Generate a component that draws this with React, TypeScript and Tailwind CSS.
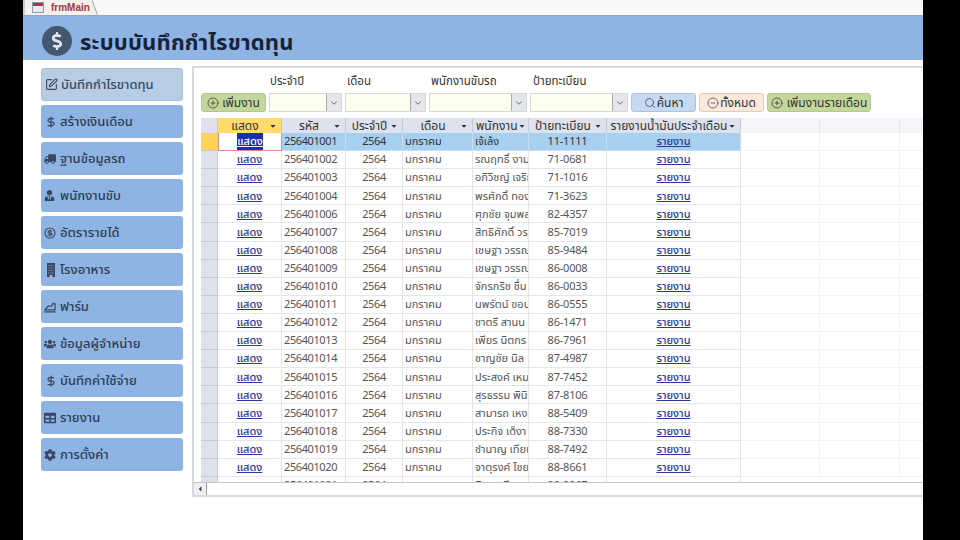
import React from 'react';
import { CirclePlus, CircleMinus, Search, ChevronDown, CircleDollarSign, SquarePen, DollarSign } from 'lucide-react';
import { FaDollarSign, FaTruck, FaUserTie, FaUsers, FaTable, FaCog, FaCaretDown, FaCaretLeft } from 'react-icons/fa';

const BuildingIcon = () => (
  <svg width="10" height="14" viewBox="0 0 10 14" fill="#3a4660" className="ml-[2px]">
    <path d="M1 0h8v14H6.5v-2h-3v2H1z" />
    <path d="M2.5 2h1v1h-1zM4.5 2h1v1h-1zM6.5 2h1v1h-1zM2.5 4.5h1v1h-1zM4.5 4.5h1v1h-1zM6.5 4.5h1v1h-1zM2.5 7h1v1h-1zM4.5 7h1v1h-1zM6.5 7h1v1h-1zM2.5 9.5h1v1h-1zM4.5 9.5h1v1h-1zM6.5 9.5h1v1h-1z" fill="#8db4e2" />
  </svg>
);

const FarmIcon = () => (
  <svg width="12" height="12" viewBox="0 0 13 12" fill="none" stroke="#3a4660" strokeWidth="1.3">
    <path d="M0.5 11.3h12" strokeWidth="1.4" />
    <path d="M1 9.2h11V2.5H9.5L8 5H4.5L1 9.2z" />
    <path d="M10 1v2" />
  </svg>
);

const menu = [
  { label: 'บันทึกกำไรขาดทุน', icon: <SquarePen className="w-[13px] h-[13px]" />, active: true },
  { label: 'สร้างเงินเดือน', icon: <DollarSign className="w-[12px] h-[12px] ml-[1px]" strokeWidth={2.5} /> },
  { label: 'ฐานข้อมูลรถ', icon: <FaTruck className="w-[12px] h-[12px] -scale-x-100" /> },
  { label: 'พนักงานขับ', icon: <FaUserTie className="w-[11px] h-[11px]" /> },
  { label: 'อัตรารายได้', icon: <CircleDollarSign className="w-[12px] h-[12px]" strokeWidth={2.25} /> },
  { label: 'โรงอาหาร', icon: <BuildingIcon /> },
  { label: 'ฟาร์ม', icon: <FarmIcon /> },
  { label: 'ข้อมูลผู้จำหน่าย', icon: <FaUsers className="w-[12px] h-[12px]" /> },
  { label: 'บันทึกค่าใช้จ่าย', icon: <DollarSign className="w-[12px] h-[12px] ml-[1px]" strokeWidth={2.5} /> },
  { label: 'รายงาน', icon: <FaTable className="w-[12px] h-[12px]" /> },
  { label: 'การตั้งค่า', icon: <FaCog className="w-[12px] h-[12px]" /> },
];

const rows = [
  ['256401001', 'เจ้เล้ง', '11-1111'],
  ['256401002', 'รณฤทธิ์ งาม', '71-0681'],
  ['256401003', 'อภิวิชญ์ เจริญ', '71-1016'],
  ['256401004', 'พรศักดิ์ ทอง', '71-3623'],
  ['256401006', 'ศุภชัย จุมพล', '82-4357'],
  ['256401007', 'สิทธิศักดิ์ วร', '85-7019'],
  ['256401008', 'เชษฐา วรรณ', '85-9484'],
  ['256401009', 'เชษฐา วรรณ', '86-0008'],
  ['256401010', 'จักรกริช ชื่น', '86-0033'],
  ['256401011', 'นพรัตน์ ขอบ', '86-0555'],
  ['256401012', 'ชาตรี สานน', '86-1471'],
  ['256401013', 'เพียร นิตกร', '86-7961'],
  ['256401014', 'ชาญชัย นิล', '87-4987'],
  ['256401015', 'ประสงค์ เหม', '87-7452'],
  ['256401016', 'สุรธรรม พินิจ', '87-8106'],
  ['256401017', 'สามารถ เหง', '88-5409'],
  ['256401018', 'ประกิจ เด็งา', '88-7330'],
  ['256401019', 'ชำนาญ เทียน', '88-7492'],
  ['256401020', 'จาตุรงค์ ไชย', '88-8661'],
  ['256401021', 'นิกร ศรี', '88-9967'],
];

const gridCols = 'grid grid-cols-[17px_64px_64px_57px_70px_56px_78px_134px_79px_80px_1fr]';

const Combo = ({ width }: { width: string }) => (
  <div className={`${width} h-[19px] flex bg-[#fffff0] border border-[#d4d8de]`}>
    <div className="flex-1" />
    <div className="w-[15px] bg-[#e4e6ea] border-l border-[#a8acb2] flex items-center justify-center">
      <ChevronDown className="w-[10px] h-[10px] text-[#555]" />
    </div>
  </div>
);

const HeadCell = ({ label, active }: { label: string; active?: boolean }) => (
  <div className={`flex items-center h-[15px] pl-[3px] pr-[4px] text-[12px] border-r border-[#c5cbd6] ${active ? 'bg-[#fedb6a]' : 'bg-[#dde2ec]'}`}>
    <span className="flex-1 whitespace-nowrap text-center">{label}</span>
    <FaCaretDown className="w-[8px] h-[8px] text-[#333] shrink-0" />
  </div>
);

export default function App() {
  return (
    <div className="w-[960px] h-[540px] flex bg-black overflow-hidden text-[11px] text-[#555] font-['Noto_Sans','Noto_Sans_Thai','Liberation_Sans',sans-serif]">
      <div className="w-[23px] shrink-0" />
      <div className="w-[900px] shrink-0 flex flex-col bg-white">
        {/* tab strip */}
        <div className="h-[16px] bg-[#f8f8f8] flex border-b border-[#9aa5b4]">
          <div className="w-[69px] h-[15px] bg-[#f3f0ee] flex items-center pl-[7px] gap-[7px] border-l-2 border-[#c8ccd2]">
            <div className="w-[12px] h-[11px] border border-[#8a98b0] bg-[#e8eaf2]">
              <div className="h-[3px] bg-[#a8324a]" />
            </div>
            <span className="text-[10px] font-bold text-[#a4373a] font-['Liberation_Sans']">frmMain</span>
          </div>
          <svg width="6" height="15" viewBox="0 0 6 15" className="bg-[#f8f8f8]">
            <path d="M0 0L0 15L6 15z" fill="#f3f0ee" />
            <path d="M0 0L5.5 15" stroke="#a8a4a0" fill="none" />
          </svg>
        </div>
        {/* header */}
        <div className="h-[44px] bg-[#8db4e2] flex items-center pl-[19px] gap-[8px] pt-[5px]">
          <div className="w-[30px] h-[30px] rounded-full bg-[#45566f] flex items-center justify-center">
            <FaDollarSign className="w-[18px] h-[18px] text-[#dfe6ef]" />
          </div>
          <h1 className="text-[22px] leading-none font-bold text-[#17233a] tracking-[0.2px]">ระบบบันทึกกำไรขาดทุน</h1>
        </div>
        <div className="flex-1 flex pl-[18px] pt-[6px]">
          {/* sidebar */}
          <div className="w-[142px] flex flex-col gap-[4px] pt-[2px]">
            {menu.map((m) => (
              <div
                key={m.label}
                className={`h-[33px] rounded-[3px] flex items-center pl-[3px] gap-[1px] text-[13px] font-medium ${
                  m.active ? 'bg-[#b8cce4] border border-[#a9c0dc] text-[#3c4a60]' : 'bg-[#8db4e2] text-[#2f3d55]'
                }`}
              >
                <span className="w-[15px] flex justify-start text-[#3a4660]">{m.icon}</span>
                <span className="whitespace-nowrap">{m.label}</span>
              </div>
            ))}
          </div>
          {/* panel */}
          <div className="ml-[9px] w-[731px] h-[431px] border-l-2 border-t-2 border-b-2 border-[#d6d9de] flex flex-col">
            <div className="flex-1 pl-[7px] min-h-0 overflow-hidden">
              <div className="flex h-[25px] items-center text-[11.5px] text-[#333]">
                <span className="ml-[69px] w-[77px]">ประจำปี</span>
                <span className="w-[84px]">เดือน</span>
                <span className="w-[102px]">พนักงานขับรถ</span>
                <span>ป้ายทะเบียน</span>
              </div>
              <div className="flex items-center gap-[3px] h-[19px] text-[12px] text-[#333]">
                <div className="w-[65px] h-[19px] bg-[#c4d79b] border border-[#b4c78c] rounded-[3px] flex items-center justify-center gap-[3px]">
                  <CirclePlus className="w-[12px] h-[12px]" strokeWidth={1.5} />
                  <span>เพิ่มงาน</span>
                </div>
                <Combo width="w-[73px]" />
                <Combo width="w-[81px]" />
                <Combo width="w-[98px]" />
                <Combo width="w-[98px]" />
                <div className="w-[65px] h-[19px] bg-[#c5d9f1] border border-[#adc4e2] rounded-[3px] flex items-center justify-center gap-[1px]">
                  <Search className="w-[12px] h-[12px] text-[#445]" strokeWidth={1.5} />
                  <span>ค้นหา</span>
                </div>
                <div className="w-[65px] h-[19px] bg-[#fde9d9] border border-[#ecc9ae] rounded-[3px] flex items-center justify-center gap-[1px]">
                  <CircleMinus className="w-[12px] h-[12px] text-[#445]" strokeWidth={1.5} />
                  <span>ทั้งหมด</span>
                </div>
                <div className="w-[104px] h-[19px] bg-[#c4d79b] border border-[#b4c78c] rounded-[3px] flex items-center justify-center gap-[4px]">
                  <CirclePlus className="w-[12px] h-[12px]" strokeWidth={1.5} />
                  <span className="whitespace-nowrap">เพิ่มงานรายเดือน</span>
                </div>
              </div>
              {/* datasheet */}
              <div className="mt-[6px] h-[364px] overflow-hidden">
                <div className={`${gridCols} text-[#333]`}>
                  <div className="h-[15px] bg-[#dde2ec] border-r border-[#c5cbd6]" />
                  <HeadCell label="แสดง" active />
                  <HeadCell label="รหัส" />
                  <HeadCell label="ประจำปี" />
                  <HeadCell label="เดือน" />
                  <HeadCell label="พนักงาน" />
                  <HeadCell label="ป้ายทะเบียน" />
                  <HeadCell label="รายงานน้ำมันประจำเดือน" />
                  <div className="bg-[#f3f5f9] border-r border-[#e6e9ee]" />
                  <div className="bg-[#f3f5f9] border-r border-[#e6e9ee]" />
                  <div className="bg-[#f3f5f9]" />
                </div>
                {rows.map((r, i) => {
                  const sel = i === 0;
                  const cell = `h-[18.1px] flex items-center border-r border-b overflow-hidden whitespace-nowrap ${
                    sel ? 'bg-[#a6cff0] border-[#c8dff2] text-[#333]' : 'border-[#e3e6ea]'
                  }`;
                  return (
                    <div key={r[0]} className={gridCols}>
                      <div className={`h-[18.1px] border-r border-b border-[#c5cbd6] ${sel ? 'bg-[#fed35c]' : 'bg-[#dde2ec]'}`} />
                      <div className={`h-[18.1px] flex items-center justify-center border-r border-b ${sel ? 'bg-white border-[#e08a92] border-l' : 'border-[#e3e6ea]'}`}>
                        <span className={`font-medium underline ${sel ? 'bg-[#1a2fb8] text-white' : 'text-[#2a3a9c]'}`}>แสดง</span>
                      </div>
                      <div className={`${cell} pl-[2px] tracking-[-0.4px]`}>{r[0]}</div>
                      <div className={`${cell} justify-center tracking-[-0.4px]`}>2564</div>
                      <div className={`${cell} pl-[2px]`}>มกราคม</div>
                      <div className={`${cell} pl-[2px]`}>{r[1]}</div>
                      <div className={`${cell} justify-center tracking-[-0.2px]`}>{r[2]}</div>
                      <div className={`${cell} justify-center`}>
                        <span className="font-medium underline text-[#2a3a9c]">รายงาน</span>
                      </div>
                      <div className="border-r border-b border-[#f2f3f5]" />
                      <div className="border-r border-b border-[#f2f3f5]" />
                      <div className="border-b border-[#f2f3f5]" />
                    </div>
                  );
                })}
              </div>
            </div>
            {/* scrollbar */}
            <div className="h-[13px] flex border-t border-[#c3c7cc] bg-white shrink-0">
              <div className="w-[13px] border-r border-[#9aa0a8] bg-[#f0f0f0] flex items-center justify-center">
                <FaCaretLeft className="w-[8px] h-[8px] text-[#444]" />
              </div>
            </div>
          </div>
        </div>
      </div>
      <div className="flex-1" />
    </div>
  );
}
